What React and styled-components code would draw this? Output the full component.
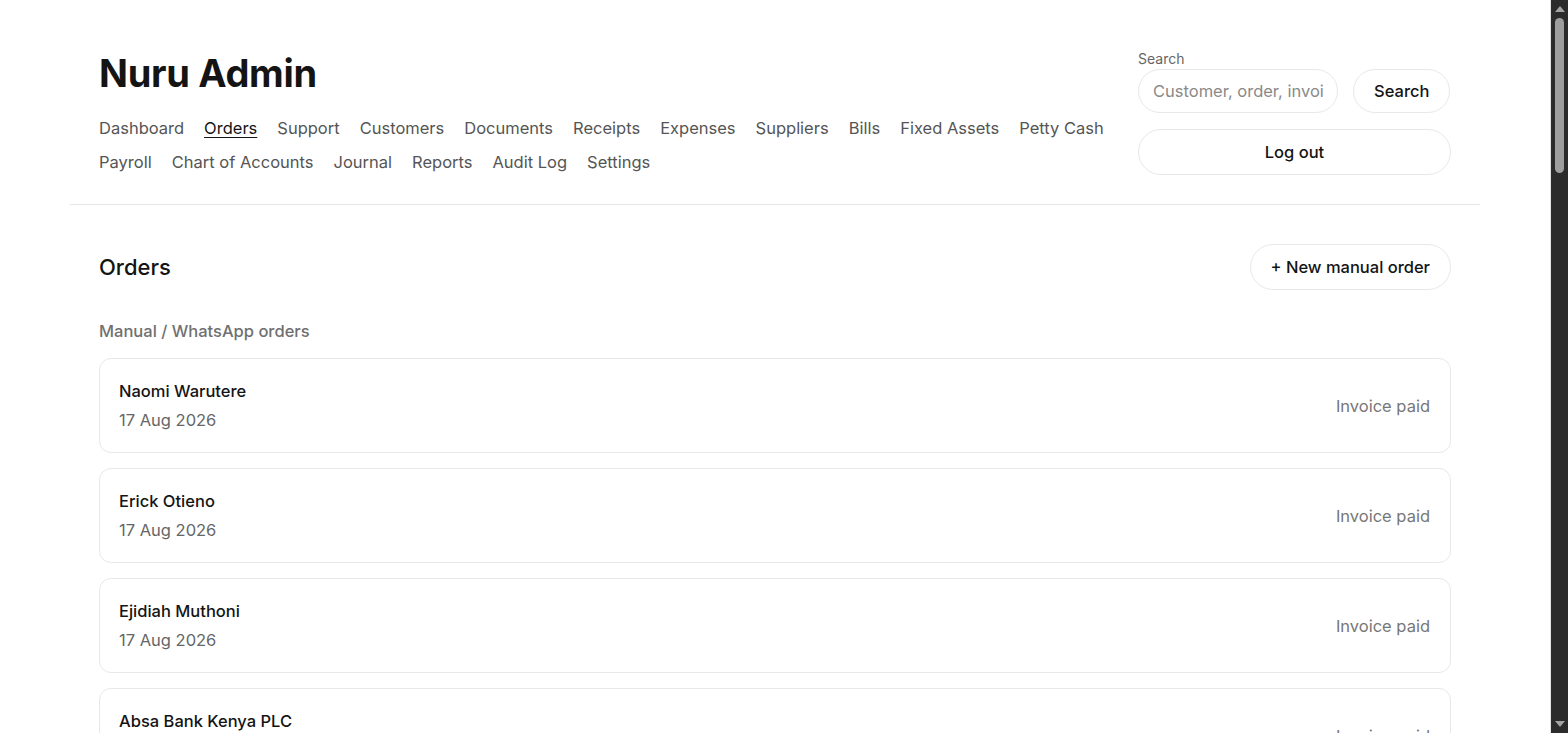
import React from "react";
import styled, { createGlobalStyle } from "styled-components";

const GlobalStyle = createGlobalStyle`
  html, body {
    margin: 0;
    background: #ffffff;
    color: #141414;
    font-family: Inter, "Noto Sans", "Liberation Sans", sans-serif;
  }
  * { box-sizing: border-box; }
`;

const navLinks = [
  "Dashboard",
  "Orders",
  "Support",
  "Customers",
  "Documents",
  "Receipts",
  "Expenses",
  "Suppliers",
  "Bills",
  "Fixed Assets",
  "Petty Cash",
  "Payroll",
  "Chart of Accounts",
  "Journal",
  "Reports",
  "Audit Log",
  "Settings",
];

const customers = [
  "Naomi Warutere",
  "Erick Otieno",
  "Ejidiah Muthoni",
  "Absa Bank Kenya PLC",
  "Grace Wanjiku",
  "Peter Kamau",
  "Faith Achieng",
  "Samuel Mwangi",
];

function App() {
  return (
    <>
      <GlobalStyle />
      <Shell>
        <Viewport>
          <Page>
            <Header>
              <Brand>
                <Title>Nuru Admin</Title>
                <Nav>
                  {navLinks.map((link) => (
                    <NavLink key={link} href="#" $active={link === "Orders"}>
                      {link}
                    </NavLink>
                  ))}
                </Nav>
              </Brand>
              <Tools>
                <SearchForm>
                  <Label htmlFor="q">Search</Label>
                  <SearchRow>
                    <SearchInput id="q" placeholder="Customer, order, invoice" />
                    <PillButton>Search</PillButton>
                  </SearchRow>
                </SearchForm>
                <PillButton $wide>Log out</PillButton>
              </Tools>
            </Header>

            <Main>
              <TitleRow>
                <PageTitle>Orders</PageTitle>
                <PillButton $tall>+ New manual order</PillButton>
              </TitleRow>
              <SectionLabel>Manual / WhatsApp orders</SectionLabel>
              <OrderList>
                {customers.map((name) => (
                  <OrderCard key={name}>
                    <div>
                      <CustomerName>{name}</CustomerName>
                      <OrderDate>17 Aug 2026</OrderDate>
                    </div>
                    <Status>Invoice paid</Status>
                  </OrderCard>
                ))}
              </OrderList>
            </Main>
          </Page>
        </Viewport>
        <ScrollTrack>
          <Arrow viewBox="0 0 10 6">
            <path d="M5 0 L10 6 L0 6 Z" />
          </Arrow>
          <Thumb />
          <TrackFill />
          <Arrow viewBox="0 0 10 6">
            <path d="M0 0 L10 0 L5 6 Z" />
          </Arrow>
        </ScrollTrack>
      </Shell>
    </>
  );
}

const Shell = styled.div`
  display: flex;
  height: 100vh;
  overflow: hidden;
`;

const Viewport = styled.div`
  flex: 1;
  min-width: 0;
  overflow: hidden;
`;

const ScrollTrack = styled.div`
  width: 18px;
  flex-shrink: 0;
  display: flex;
  flex-direction: column;
  align-items: center;
  padding: 6px 0 6px;
  background: #2b2b2b;
  border-left: 1px solid #e2e2e2;
`;

const Arrow = styled.svg`
  width: 10px;
  height: 6px;
  fill: #a3a3a3;
  flex-shrink: 0;
`;

const Thumb = styled.div`
  width: 9px;
  height: 155px;
  margin-top: 6px;
  border-radius: 5px;
  background: #9e9e9e;
`;

const TrackFill = styled.div`
  flex: 1;
`;

const Page = styled.div`
  max-width: 1410px;
  margin: 0 auto;
`;

const Header = styled.header`
  display: flex;
  justify-content: space-between;
  align-items: flex-start;
  padding: 47px 29px 29px;
  border-bottom: 1px solid #e6e6e6;
`;

const Brand = styled.div`
  flex: 1;
  max-width: 1020px;
`;

const Title = styled.h1`
  margin: 0 0 18px;
  font-size: 38px;
  line-height: 52px;
  font-weight: 700;
  letter-spacing: -0.3px;
  color: #141414;
`;

const Nav = styled.nav`
  display: flex;
  flex-wrap: wrap;
  column-gap: 20px;
  row-gap: 11px;
`;

const NavLink = styled.a`
  font-size: 16.5px;
  line-height: 23px;
  color: ${(p) => (p.$active ? "#141414" : "#555555")};
  text-decoration: ${(p) => (p.$active ? "underline" : "none")};
  text-underline-offset: 3px;
`;

const Tools = styled.div`
  display: flex;
  flex-direction: column;
  gap: 16px;
  width: 313px;
  padding-top: 3px;
`;

const SearchForm = styled.div`
  display: flex;
  flex-direction: column;
  gap: 1px;
`;

const Label = styled.label`
  font-size: 14px;
  line-height: 18px;
  color: #666666;
`;

const SearchRow = styled.div`
  display: flex;
  gap: 15px;
`;

const SearchInput = styled.input`
  width: 200px;
  height: 44px;
  padding: 0 14px;
  border: 1px solid #e8e8e8;
  border-radius: 999px;
  font: inherit;
  font-size: 16.5px;
  color: #141414;
  outline: none;
  &::placeholder {
    color: #8a8a8a;
  }
`;

const PillButton = styled.button`
  height: ${(p) => (p.$wide || p.$tall ? "46px" : "44px")};
  padding: 0 20px;
  width: ${(p) => (p.$wide ? "100%" : "auto")};
  border: 1px solid #e8e8e8;
  border-radius: 999px;
  background: #ffffff;
  font: inherit;
  font-size: 16.5px;
  font-weight: 500;
  color: #141414;
  cursor: pointer;
`;

const Main = styled.main`
  padding: 39px 29px 40px;
`;

const TitleRow = styled.div`
  display: flex;
  justify-content: space-between;
  align-items: center;
`;

const PageTitle = styled.h2`
  margin: 0;
  font-size: 22px;
  font-weight: 500;
  color: #141414;
`;

const SectionLabel = styled.h3`
  margin: 30px 0 16px;
  font-size: 16.5px;
  line-height: 22px;
  font-weight: 500;
  color: #707070;
`;

const OrderList = styled.div`
  display: flex;
  flex-direction: column;
  gap: 15px;
`;

const OrderCard = styled.div`
  display: flex;
  justify-content: space-between;
  align-items: center;
  min-height: 95px;
  padding: 20px 20px 20px 19px;
  border: 1px solid #e8e8e8;
  border-radius: 12px;
`;

const CustomerName = styled.div`
  font-size: 16.5px;
  line-height: 22px;
  font-weight: 500;
  color: #141414;
`;

const OrderDate = styled.div`
  margin-top: 7px;
  font-size: 16.5px;
  line-height: 22px;
  color: #666666;
`;

const Status = styled.div`
  font-size: 16.5px;
  color: #777777;
`;

export default App;
